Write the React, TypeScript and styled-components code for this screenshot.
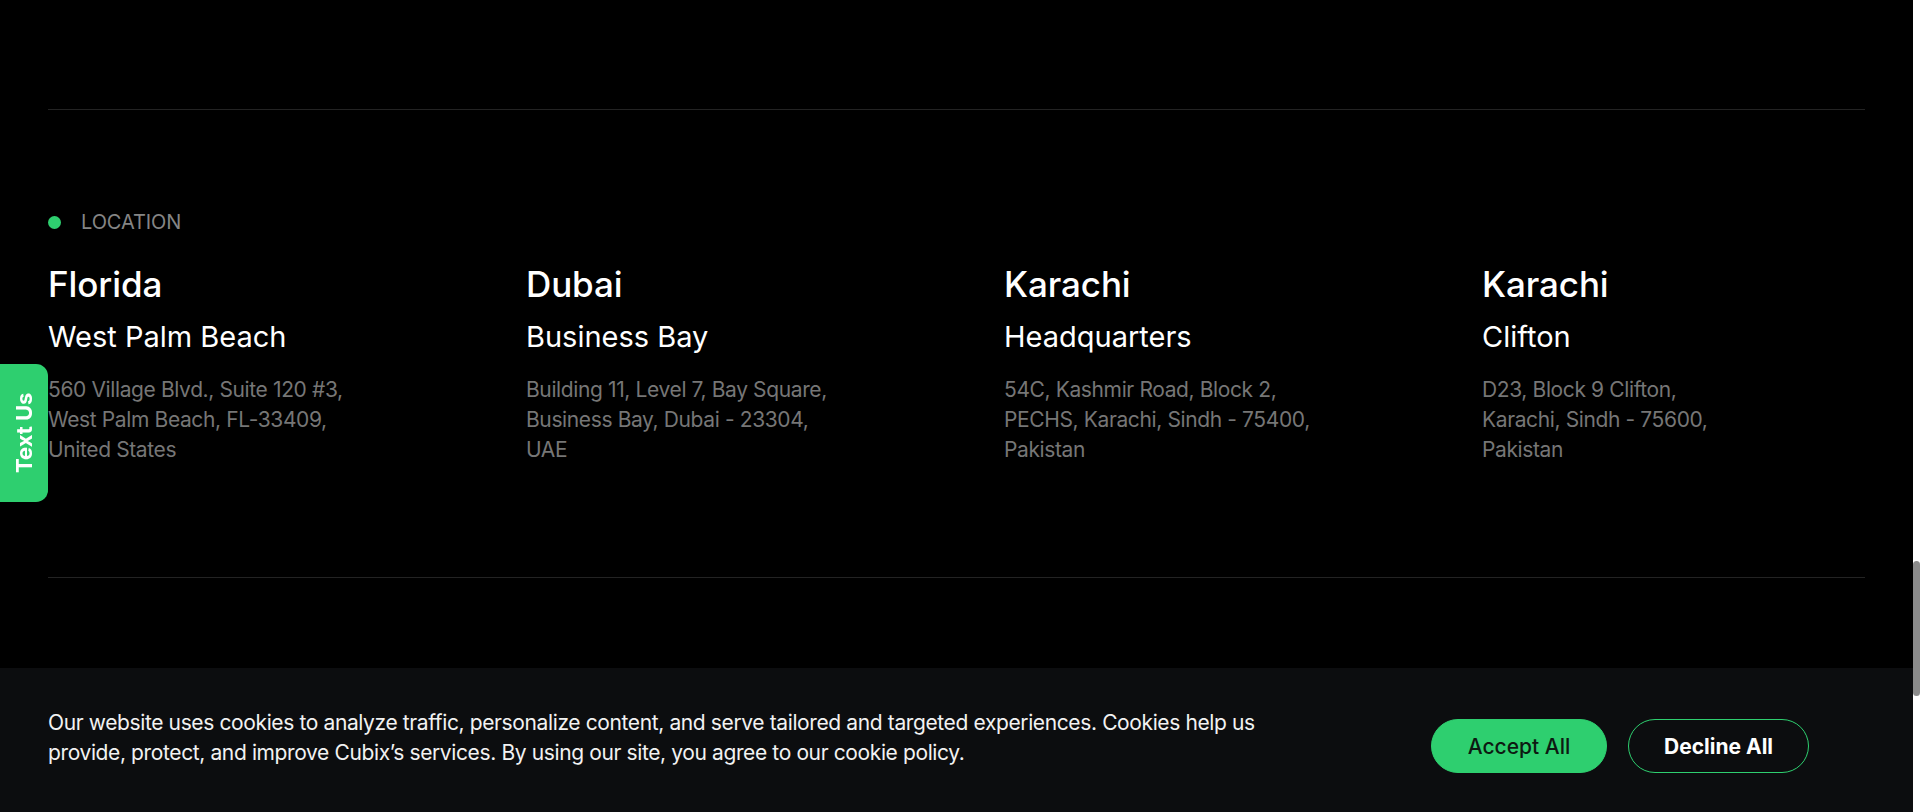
import React from 'react'
import styled, { createGlobalStyle } from 'styled-components'

const GREEN = '#2ecf6f'

const GlobalStyle = createGlobalStyle`
  html, body {
    margin: 0;
    padding: 0;
    background: #000;
    overflow: hidden;
  }
  body {
    font-family: Inter, 'Noto Sans', sans-serif;
    -webkit-font-smoothing: antialiased;
  }
`

const Screen = styled.div`
  display: flex;
  height: 812px;
  width: 100%;
`
const Page = styled.div`
  flex: 1;
  display: flex;
  flex-direction: column;
  background: #000;
  min-width: 0;
`
const ScrollTrack = styled.div`
  width: 7px;
  background: #ffffff;
  display: flex;
  flex-direction: column;
`
const ScrollThumb = styled.div`
  margin-top: 561px;
  height: 135px;
  width: 7px;
  border-radius: 4px;
  background: #8b8b8b;
`
const Content = styled.main`
  flex: 1;
  padding: 109px 48px 0 48px;
`
const Divider = styled.div`
  height: 1px;
  width: 100%;
  background-color: #232323;
`
const Section = styled.section`
  padding: 100px 0 112px 0;
`
const Eyebrow = styled.div`
  display: flex;
  align-items: center;
  gap: 20px;
  height: 24px;
  font-size: 20px;
  line-height: 24px;
  color: #858585;
  text-transform: uppercase;
  letter-spacing: -0.1px;
`
const Dot = styled.span`
  width: 13px;
  height: 13px;
  border-radius: 50%;
  background: ${GREEN};
`
const LocationGrid = styled.div`
  display: grid;
  grid-template-columns: repeat(4, 1fr);
  column-gap: 95px;
  margin-top: 30px;
`
const LocationCard = styled.div`
  display: flex;
  flex-direction: column;
`
const City = styled.h3`
  margin: 0;
  font-size: 35px;
  line-height: 40.8px;
  font-weight: 500;
  color: #ffffff;
  letter-spacing: -0.1px;
`
const Area = styled.h4`
  margin: 15px 0 0 0;
  font-size: 29px;
  line-height: 33.6px;
  font-weight: 400;
  color: #ffffff;
  letter-spacing: 0;
`
const Address = styled.p`
  margin: 22px 0 0 0;
  font-size: 21px;
  line-height: 30px;
  color: #767676;
  letter-spacing: -0.38px;
`
const CookieBar = styled.div`
  height: 144px;
  flex-shrink: 0;
  background: #0c0d0f;
  display: flex;
  align-items: flex-start;
  justify-content: space-between;
  padding: 0 104px 0 48px;
`
const CookieText = styled.p`
  margin: 40px 0 0 0;
  font-size: 21px;
  line-height: 30px;
  color: #f2f2f2;
  letter-spacing: -0.38px;
`
const Actions = styled.div`
  display: flex;
  gap: 21px;
  margin-top: 51px;
`
const PillButton = styled.button<{ $variant: 'solid' | 'outline' }>`
  height: 54px;
  border-radius: 27px;
  font-family: Inter, 'Noto Sans', sans-serif;
  font-size: 21px;
  cursor: pointer;
  letter-spacing: 0;
  width: ${({ $variant }) => ($variant === 'solid' ? '176px' : '181px')};
  background: ${({ $variant }) => ($variant === 'solid' ? GREEN : 'transparent')};
  color: ${({ $variant }) => ($variant === 'solid' ? '#0d1a12' : '#ffffff')};
  font-weight: ${({ $variant }) => ($variant === 'solid' ? 500 : 700)};
  border: 1px solid ${GREEN};
`
const TextUsTab = styled.a`
  position: fixed;
  left: 0;
  top: 364px;
  width: 48px;
  height: 138px;
  background: ${GREEN};
  display: flex;
  align-items: center;
  justify-content: center;
  color: #ffffff;
  font-weight: 700;
  font-size: 22px;
  text-decoration: none;
  writing-mode: vertical-rl;
  transform: rotate(180deg);
  border-radius: 12px 0 0 12px;
  letter-spacing: 0;
`

const locations = [
  {
    city: 'Florida',
    area: 'West Palm Beach',
    lines: ['560 Village Blvd., Suite 120 #3,', 'West Palm Beach, FL-33409,', 'United States'],
  },
  {
    city: 'Dubai',
    area: 'Business Bay',
    lines: ['Building 11, Level 7, Bay Square,', 'Business Bay, Dubai - 23304,', 'UAE'],
  },
  {
    city: 'Karachi',
    area: 'Headquarters',
    lines: ['54C, Kashmir Road, Block 2,', 'PECHS, Karachi, Sindh - 75400,', 'Pakistan'],
  },
  {
    city: 'Karachi',
    area: 'Clifton',
    lines: ['D23, Block 9 Clifton,', 'Karachi, Sindh - 75600,', 'Pakistan'],
  },
]

const App: React.FC = () => {
  return (
    <>
      <GlobalStyle />
      <Screen>
        <Page>
          <Content>
            <Divider />
            <Section>
              <Eyebrow>
                <Dot />
                Location
              </Eyebrow>
              <LocationGrid>
                {locations.map((loc) => (
                  <LocationCard key={loc.area}>
                    <City>{loc.city}</City>
                    <Area>{loc.area}</Area>
                    <Address>
                      {loc.lines.map((line, i) => (
                        <React.Fragment key={line}>
                          {line}
                          {i < loc.lines.length - 1 && <br />}
                        </React.Fragment>
                      ))}
                    </Address>
                  </LocationCard>
                ))}
              </LocationGrid>
            </Section>
            <Divider />
          </Content>
          <CookieBar>
            <CookieText>
              Our website uses cookies to analyze traffic, personalize content, and serve tailored and targeted experiences. Cookies help us
              <br />
              provide, protect, and improve Cubix’s services. By using our site, you agree to our cookie policy.
            </CookieText>
            <Actions>
              <PillButton $variant="solid">Accept All</PillButton>
              <PillButton $variant="outline">Decline All</PillButton>
            </Actions>
          </CookieBar>
        </Page>
        <ScrollTrack>
          <ScrollThumb />
        </ScrollTrack>
      </Screen>
      <TextUsTab href="#">Text Us</TextUsTab>
    </>
  )
}

export default App
